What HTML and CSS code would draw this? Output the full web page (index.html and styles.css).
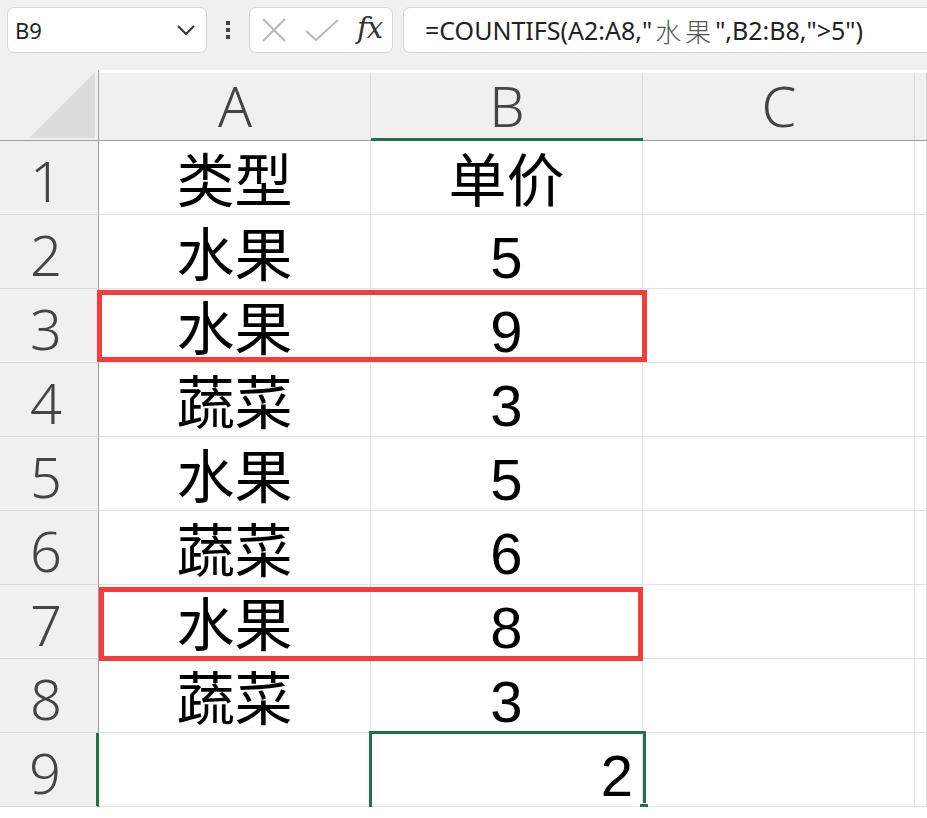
FILE: index.html
```html
<!DOCTYPE html>
<html>
<head>
  <title>COUNTIFS</title>
  <link rel="stylesheet" href="styles.css">
</head>
<body>
  <div class="toolbar">
    <div class="namebox">
      <span>B9</span>
      <svg class="chevron" width="18" height="10" viewBox="0 0 18 10"><path d="M1 1 L9 9 L17 1" fill="none" stroke="#333" stroke-width="2"/></svg>
    </div>
    <div class="dots"><i></i><i></i><i></i></div>
    <div class="fxbox">
      <svg width="26" height="26" viewBox="0 0 26 26"><path d="M2 2 L24 24 M24 2 L2 24" stroke="#b8b8b8" stroke-width="2"/></svg>
      <svg width="34" height="24" viewBox="0 0 34 24"><path d="M1 13 L11 22 L33 2" fill="none" stroke="#b8b8b8" stroke-width="2"/></svg>
      <span class="fx">fx</span>
    </div>
    <div class="formula">=COUNTIFS(A2:A8,"<span class="cjk">水果</span>",B2:B8,"&gt;5")</div>
  </div>

  <div class="sheet">
    <div class="corner"><div class="tri"></div></div>
    <div class="colhead">A</div>
    <div class="colhead active">B</div>
    <div class="colhead">C</div>
    <div class="colhead"></div>

    <div class="rowhead">1</div><div class="cell txt">类型</div><div class="cell txt">单价</div><div class="cell"></div><div class="cell"></div>
    <div class="rowhead">2</div><div class="cell txt">水果</div><div class="cell num">5</div><div class="cell"></div><div class="cell"></div>
    <div class="rowhead">3</div><div class="cell txt">水果</div><div class="cell num">9</div><div class="cell"></div><div class="cell"></div>
    <div class="rowhead">4</div><div class="cell txt">蔬菜</div><div class="cell num">3</div><div class="cell"></div><div class="cell"></div>
    <div class="rowhead">5</div><div class="cell txt">水果</div><div class="cell num">5</div><div class="cell"></div><div class="cell"></div>
    <div class="rowhead">6</div><div class="cell txt">蔬菜</div><div class="cell num">6</div><div class="cell"></div><div class="cell"></div>
    <div class="rowhead">7</div><div class="cell txt">水果</div><div class="cell num">8</div><div class="cell"></div><div class="cell"></div>
    <div class="rowhead">8</div><div class="cell txt">蔬菜</div><div class="cell num">3</div><div class="cell"></div><div class="cell"></div>
    <div class="rowhead active">9</div><div class="cell"></div><div class="cell num right">2</div><div class="cell"></div><div class="cell"></div>

    <div class="mark mark-3"></div>
    <div class="mark mark-7"></div>
    <div class="selected"><div class="handle"></div></div>
  </div>
</body>
</html>
```

FILE: styles.css
```css
body {
  margin: 0;
  background: #fff;
  font-family: "Noto Sans", "Open Sans", sans-serif;
  overflow: hidden;
}

.toolbar {
  height: 70px;
  background: #f0f0f0;
  display: flex;
  align-items: flex-start;
  padding: 7px 0 0 7px;
  box-sizing: border-box;
}

.namebox {
  width: 200px;
  height: 46px;
  box-sizing: border-box;
  background: #fff;
  border: 1px solid #d6d6d6;
  border-radius: 7px;
  display: flex;
  align-items: center;
  justify-content: space-between;
  padding: 0 11px 0 7px;
  font-size: 22px;
  color: #222;
}

.dots {
  width: 42px;
  height: 46px;
  display: flex;
  flex-direction: column;
  align-items: center;
  justify-content: center;
  gap: 3px;
}

.dots i {
  width: 4px;
  height: 4px;
  background: #444;
}

.fxbox {
  width: 144px;
  height: 46px;
  box-sizing: border-box;
  background: #fff;
  border: 1px solid #d6d6d6;
  border-radius: 7px;
  display: flex;
  align-items: center;
  gap: 18px;
  padding-left: 11px;
}

.fx {
  font-family: "DejaVu Serif", "Liberation Serif", serif;
  font-style: italic;
  font-size: 29px;
  color: #333;
  margin-top: -4px;
  letter-spacing: -1px;
}

.formula {
  flex: 1;
  height: 46px;
  margin-left: 10px;
  box-sizing: border-box;
  background: #fff;
  border: 1px solid #d6d6d6;
  border-right: none;
  border-radius: 7px 0 0 7px;
  display: flex;
  align-items: center;
  padding-left: 21px;
  font-size: 25px;
  color: #222;
  white-space: pre;
}

.formula .cjk {
  font-family: "Noto Sans CJK SC", sans-serif;
  font-size: 26px;
  font-weight: 300;
  color: #555;
  letter-spacing: 4px;
  margin-left: 3px;
}

.sheet {
  position: relative;
  display: grid;
  grid-template-columns: 99px 272px 272px 272px 1fr;
  grid-template-rows: 71px repeat(9, 74px);
}

.corner {
  background: #f0f0f0;
  border-right: 1px solid #9e9e9e;
  border-bottom: 1px solid #9e9e9e;
  position: relative;
}

.tri {
  position: absolute;
  right: 3px;
  bottom: 2px;
  width: 66px;
  height: 66px;
  background: #dcdcdc;
  clip-path: polygon(100% 0, 100% 100%, 0 100%);
}

.colhead {
  background: #f0f0f0;
  border-bottom: 1px solid #9e9e9e;
  box-shadow: inset -1px 0 0 #d8d8d8;
  display: flex;
  justify-content: center;
  align-items: flex-end;
  font-size: 56px;
  font-weight: 300;
  line-height: 1;
  padding-bottom: 7px;
  color: #444;
  box-sizing: border-box;
  clip-path: inset(3px 0 0 0);
}

.colhead.active {
  border-bottom: 3px solid #217346;
  padding-bottom: 5px;
}

.rowhead {
  background: #f0f0f0;
  border-right: 1px solid #9e9e9e;
  border-bottom: 1px solid #d8d8d8;
  display: flex;
  justify-content: center;
  align-items: flex-end;
  font-size: 56px;
  font-weight: 300;
  line-height: 1;
  padding: 0 6px 6px 0;
  color: #444;
  box-sizing: border-box;
}

.rowhead.active {
  border-right: 3px solid #217346;
}

.cell {
  border-right: 1px solid #e1e1e1;
  border-bottom: 1px solid #e1e1e1;
  display: flex;
  justify-content: center;
  align-items: flex-end;
  color: #000;
  line-height: 1;
  box-sizing: border-box;
}

.txt {
  font-family: "Noto Sans CJK SC", sans-serif;
  font-size: 58px;
  padding-bottom: 8px;
}

.num {
  font-family: "Liberation Sans", Arial, sans-serif;
  font-size: 58px;
  padding-bottom: 1px;
}

.right {
  justify-content: flex-end;
  padding-right: 9px;
}

.mark {
  position: absolute;
  border: 5px solid #f53b3b;
}

.mark-3 {
  left: 97px;
  top: 220px;
  width: 540px;
  height: 62px;
}

.mark-7 {
  left: 99px;
  top: 517px;
  width: 534px;
  height: 64px;
}

.selected {
  position: absolute;
  left: 369px;
  top: 661px;
  width: 271px;
  height: 73px;
  border: 3px solid #217346;
}

.handle {
  position: absolute;
  right: -6px;
  bottom: -6px;
  width: 8px;
  height: 8px;
  background: #217346;
  border: 1px solid #fff;
}
```
